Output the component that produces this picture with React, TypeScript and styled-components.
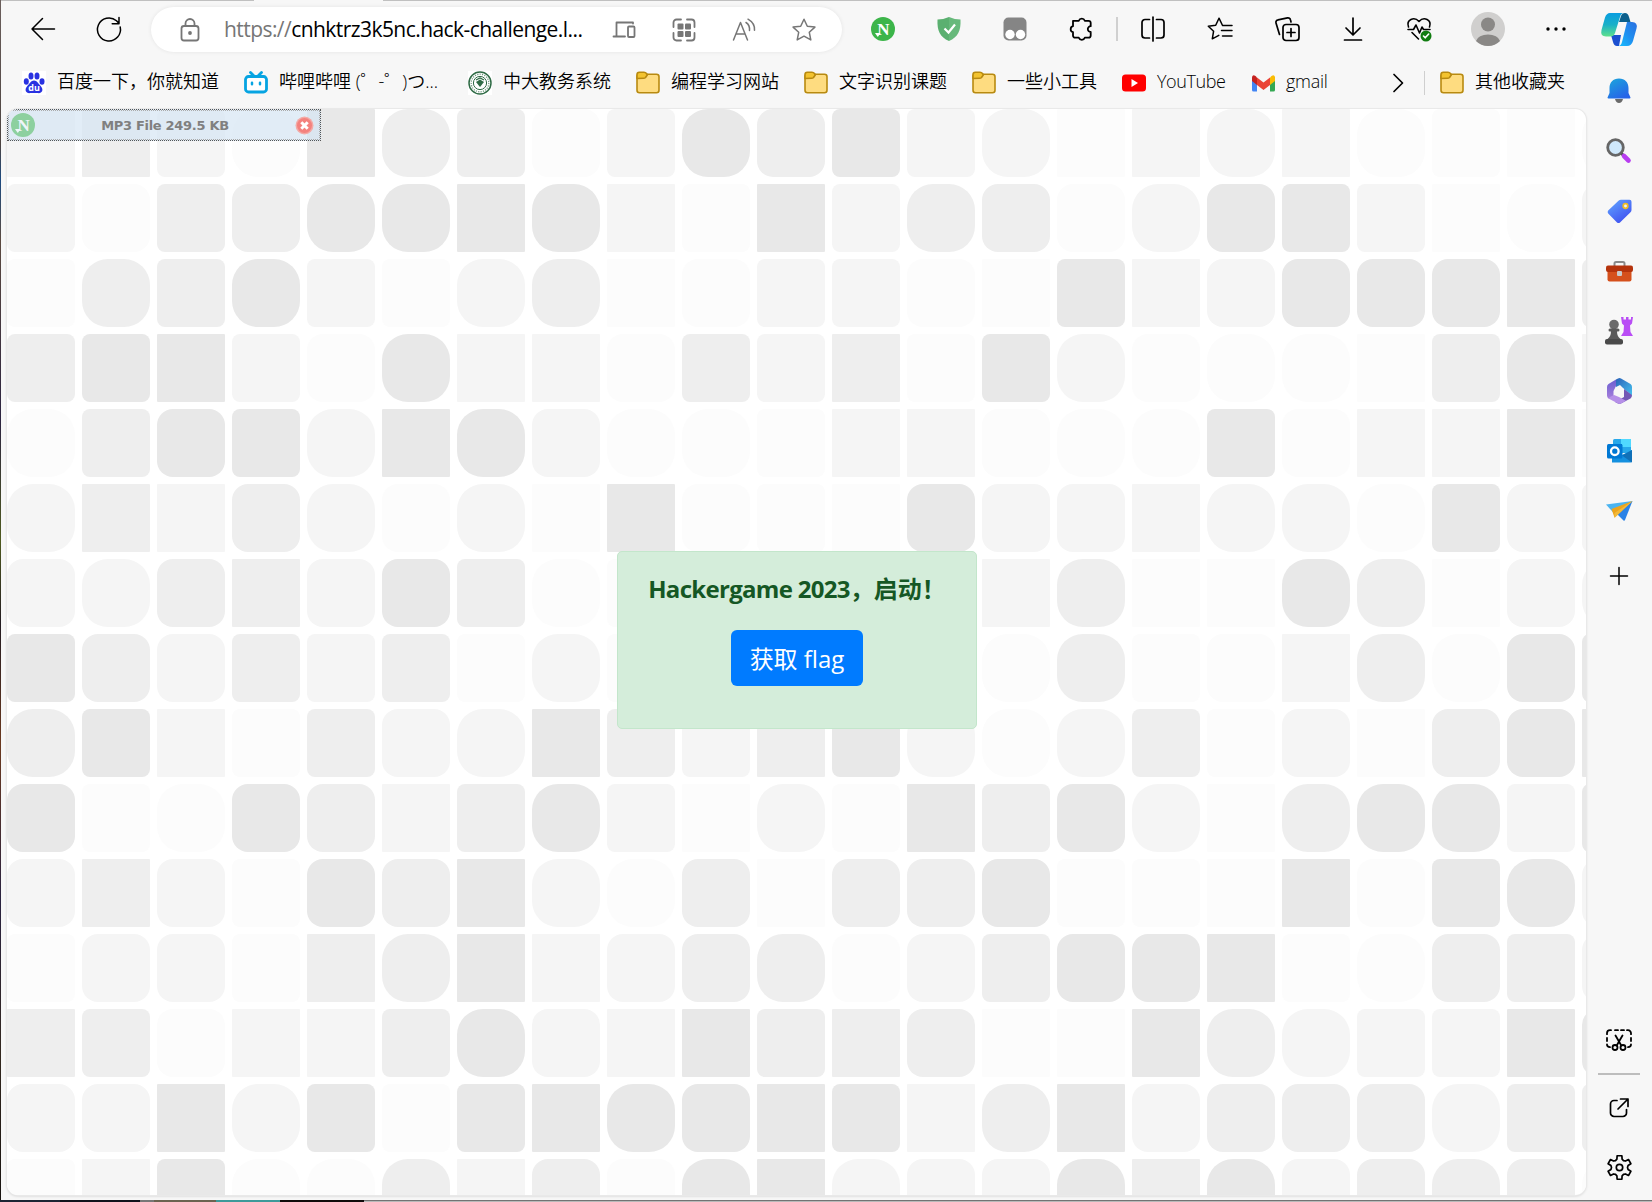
import React from "react";
import styled, { createGlobalStyle } from "styled-components";

const Global = createGlobalStyle`
  * { box-sizing: border-box; }
  html, body { margin: 0; padding: 0; overflow: hidden; }
  body { font-family: "Open Sans", "Noto Sans", "Noto Sans CJK SC", sans-serif; color: #000; }
  svg { display: block; flex: none; overflow: visible; }
`;

const Desktop = styled.div`
  width: 1652px;
  height: 1202px;
  display: grid;
  grid-template-columns: 1px 1586px 65px;
  grid-template-rows: 1px 1199px 2px;
  background: #f7f7f7;
`;
const LeftEdge = styled.div`
  grid-row: 1 / 3;
  background: linear-gradient(#6b5f5c, #4c4340 12%, #1d4a80 15%, #5b4a40 20%, #2c2440 35%, #4f5a20 45%, #241c22 52%, #6b3a20 62%, #2a2340 75%, #33281f 88%, #181310);
`;
const TabEdge = styled.div`
  grid-column: 2 / 4;
  background: linear-gradient(90deg, #c0c0c0 253px, #f7f7f7 253px, #f7f7f7 382px, #c0c0c0 382px);
`;
const BottomEdge = styled.div`
  grid-column: 1 / 4;
  background:
    linear-gradient(90deg, #1c2534 0 60px, #10131c 60px 140px, #777 140px 154px, #6b6350 154px 216px, #3d9a9a 216px 280px, #100b0b 280px 364px, transparent 364px),
    linear-gradient(#737373 1px, #b9b9b9 1px);
`;

const Main = styled.main`
  display: flex;
  flex-direction: column;
  min-width: 0;
`;
const Toolbar = styled.div`
  height: 57px;
  flex: none;
  display: flex;
  align-items: center;
  padding: 0 0 2px 9px;
`;
const Cell = styled.div<{ $w?: number }>`
  width: ${(p) => p.$w ?? 66}px;
  flex: none;
  display: flex;
  justify-content: center;
  align-items: center;
`;
const AddressBar = styled.div`
  width: 691px;
  height: 45px;
  flex: none;
  margin: 2px 8px 0 9px;
  padding: 0 8px 0 27px;
  border-radius: 23px;
  background: #fff;
  box-shadow: 0 0 4px rgba(0, 0, 0, 0.08);
  display: flex;
  align-items: center;
  color: #767676;
`;
const Url = styled.div`
  flex: 1;
  margin: -1px 0 0 22px;
  font-size: 21px;
  line-height: 30px;
  letter-spacing: -0.56px;
  white-space: nowrap;
  b { font-weight: 400; color: #000; }
`;
const Divider = styled.div<{ $w: number; $h: number; $c: string }>`
  width: ${(p) => p.$w}px;
  height: ${(p) => p.$h}px;
  flex: none;
  background: ${(p) => p.$c};
`;

const Bookmarks = styled.nav`
  height: 51px;
  flex: none;
  display: flex;
  align-items: center;
  padding: 0 0 2px 20px;
`;
const Bookmark = styled.div<{ $w: number }>`
  width: ${(p) => p.$w}px;
  flex: none;
  display: flex;
  align-items: center;
  gap: 11px;
  font-size: 18px;
  line-height: 26px;
  white-space: nowrap;
`;
const Label = styled.span<{ $ls?: number }>`
  margin-top: -3px;
  font-weight: 350;
  letter-spacing: ${(p) => p.$ls ?? 0}px;
`;

const Page = styled.section`
  width: 1579px;
  height: 1086px;
  margin-left: 6px;
  flex: none;
  display: grid;
  overflow: hidden;
  background: #fff;
  border-radius: 11px;
  box-shadow: 0 0 0 1px #e9e9e9, 0 1px 3px rgba(0, 0, 0, 0.18);
`;
const Wallpaper = styled.div`
  grid-area: 1 / 1;
  display: grid;
  grid-template-columns: repeat(22, 68px);
  grid-auto-rows: 68px;
  gap: 7px;
  width: 1580px;
  height: 1087px;
  overflow: hidden;
`;
const shades: Record<string, string> = { a: "#fcfcfc", b: "#f5f5f5", c: "#eeeeee", d: "#e8e8e8" };
const radii = [1, 8, 16, 26];
const Tile = styled.div<{ $shade: string; $round: number }>`
  background: ${(p) => shades[p.$shade]};
  border-radius: ${(p) => radii[p.$round]}px;
`;
const Overlay = styled.div`
  grid-area: 1 / 1;
  z-index: 1;
  display: flex;
  flex-direction: column;
`;
const MediaBar = styled.div`
  width: 314px;
  height: 32px;
  padding: 0 6px 0 3px;
  border: 1px dotted #555;
  outline: 1px dotted #aaa;
  outline-offset: -2px;
  background: rgba(214, 230, 243, 0.7);
  display: flex;
  align-items: center;
  justify-content: space-between;
  font: bold 13px "DejaVu Sans", sans-serif;
  letter-spacing: -0.3px;
  color: #808080;
`;
const Faded = styled.span`
  opacity: 0.5;
`;
const Alert = styled.div`
  width: 360px;
  height: 178px;
  margin: 410px 0 0 610px;
  border: 1px solid #c3e6cb;
  border-radius: 5px;
  background: #d4edda;
  display: flex;
  flex-direction: column;
  align-items: center;
`;
const Title = styled.h1`
  margin: 19px 0 0;
  font-size: 24px;
  line-height: 36px;
  font-weight: 700;
  white-space: nowrap;
  color: #155724;
`;
const Tight = styled.span`
  letter-spacing: -0.7px;
`;
const FlagButton = styled.button`
  width: 132px;
  height: 56px;
  margin-top: 23px;
  padding: 2px 0 0;
  border: 0;
  border-radius: 6px;
  background: #007bff;
  color: #fff;
  font: 400 24px/36px "Open Sans", "Noto Sans CJK SC", sans-serif;
  white-space: nowrap;
`;

const Sidebar = styled.aside`
  display: flex;
  flex-direction: column;
  align-items: center;
  padding-right: 1px;
`;
const Slot = styled.div<{ $h?: number }>`
  height: ${(p) => p.$h ?? 60}px;
  flex: none;
  display: flex;
  align-items: center;
  justify-content: center;
`;
const Spacer = styled.div`
  flex: 1;
`;

const rows = [
  "b0 c0 b1 a3 d0 c3 c1 a2 b1 d3 c2 d1 b1 b3 a0 b0 b3 b0 a3 a1 a0 a3",
  "b1 a2 c1 c2 d3 d3 d0 d3 b0 a1 d0 b1 c3 c2 a2 b3 d2 d1 b1 a0 a3 b2",
  "a1 c3 c1 d3 b1 a1 b3 c3 a0 a2 b1 b1 a2 a0 d1 b0 b2 d2 d2 d2 d0 c1",
  "c1 d1 d0 b1 a2 d3 b0 b0 a2 c1 b1 c0 a1 d1 b3 a2 a3 a3 a0 c1 d3 b0",
  "a3 c1 d2 d1 b3 d0 d3 b2 a3 a3 a1 b0 b0 a2 a3 a3 d1 a2 b0 b0 d0 a0",
  "b3 c0 b0 c2 b3 a2 b3 a0 d0 a2 a1 a0 d2 b2 b2 b0 b3 b3 a3 d1 b2 b1",
  "b2 b3 c2 c0 b2 d2 c1 a3 a1 a1 a1 a1 a1 b0 c3 a0 a0 d3 c3 a0 b2 b3",
  "d1 c2 b2 c1 b1 c1 a1 b3 a1 a1 a1 a1 a1 a3 c3 a1 a2 b0 c3 a3 d2 d1",
  "c3 d1 b0 a1 c1 b2 b3 d0 c1 b1 c0 d1 b3 a3 b3 c1 a1 b2 a0 c2 d2 d0",
  "d2 a1 a3 d2 c2 b0 c1 d3 b1 a0 b3 a1 d0 c1 d2 b3 a0 c3 d3 d3 b1 d1",
  "b2 c0 b2 a1 d2 c2 d0 b3 a3 c2 a0 c2 c2 d2 a1 a1 a0 d0 a2 d1 d3 b2",
  "a1 b2 b2 a1 c0 c3 d0 b0 b2 c2 c3 a2 b2 c1 d2 d2 d0 a1 a3 c2 c1 b2",
  "c0 c1 a2 b0 b0 c1 d3 b2 b0 d0 c1 c0 c2 a0 a0 d0 c3 b3 b1 b1 d0 d2",
  "b2 b2 d0 b3 d1 a1 d1 d0 d3 d2 d0 d1 b0 c3 d0 b2 c2 c2 c2 b3 c1 c1",
  "a1 b0 d1 a3 a3 c3 b0 c2 a2 d3 d0 b3 b2 b2 d3 c0 d3 b2 c2 c3 c2 a3",
];

type IconProps = { w?: number; h?: number; sw?: number; color?: string; children: React.ReactNode };
const Icon = ({ w = 24, h = 24, sw = 1.5, color = "currentColor", children }: IconProps) => (
  <svg width={w} height={h} viewBox={`0 0 ${w} ${h}`} fill="none" stroke={color} strokeWidth={sw} strokeLinecap="round" strokeLinejoin="round">
    {children}
  </svg>
);

const Back = () => <Icon><path d="M23.500 12H1M11.500 1.500L1 12l10.500 10.500" /></Icon>;
const Reload = () => <Icon w={26} h={26}><path d="M24.200 11A11.500 11.500 0 1 1 20.500 4.800L23 7.500M23 1.500V7.800h-6.800" /></Icon>;
const Lock = () => (
  <Icon sw={1.8}><rect x="3.500" y="8" width="17" height="14.500" rx="2.500" /><path d="M7.500 8V5.500a4.500 4.500 0 0 1 9 0V8" /><circle cx="12" cy="15" r="1" fill="currentColor" /></Icon>
);
const Devices = () => (
  <Icon sw={1.8}><path d="M21 5.500V4.500H4.500V18M1.500 18.500H13" /><rect x="16" y="8.500" width="6.500" height="10.500" rx="1" /></Icon>
);
const Qr = () => (
  <Icon sw={1.8}>
    <path d="M9 1.500H4.500a3 3 0 0 0-3 3V9M15 1.500h4.500a3 3 0 0 1 3 3V9M9 22.500H4.500a3 3 0 0 1-3-3V15M15 22.500h4.500a3 3 0 0 0 3-3V15" />
    <g fill="currentColor" stroke="none"><rect x="5.500" y="5.500" width="6" height="6" rx="1" /><rect x="13" y="5.500" width="6" height="6" rx="1" /><rect x="5.500" y="13" width="6" height="6" rx="1" /><rect x="13" y="13" width="6" height="6" rx="1" /></g>
  </Icon>
);
const ReadAloud = () => (
  <Icon><path d="M1.500 22L8.500 4.500 15.500 22M4 16h9M14 4.500q4 2.500 3.500 8M16 1.200q7 4 6.500 11" /></Icon>
);
const star = "M12 1.200l3.300 7 7.600.9-5.600 5.200 1.500 7.600L12 18.200l-6.800 3.700 1.500-7.600L1.100 9.100l7.600-.9z";
const Star = () => <Icon><path d={star} /></Icon>;
const NeatMark = ({ r = 12 }: { r?: number }) => (
  <svg width={r * 2} height={r * 2} viewBox="0 0 24 24">
    <circle cx="12" cy="12" r="12" fill="#3cb54a" />
    <text x="12.500" y="17.500" fontSize="17" fontWeight="700" textAnchor="middle" fill="#fff" fontFamily="Liberation Serif, serif">N</text>
    <path d="M4 16h5.500L6.800 20z" fill="#fff" />
  </svg>
);
const Shield = () => (
  <svg width="24" height="24" viewBox="0 0 24 24">
    <path d="M12 0Q18 2.500 23.500 2.500C24 14 21 20 12 24z" fill="#67b97b" /><path d="M12 0Q6 2.500.5 2.500C0 14 3 20 12 24z" fill="#5bb070" />
    <path d="M7.500 11.500l4 4 6.500-8" fill="none" stroke="#fff" strokeWidth="2.200" />
  </svg>
);
const Tamper = () => (
  <svg width="24" height="24" viewBox="0 0 24 24">
    <rect x=".5" y=".5" width="23" height="23" rx="5" fill="#858585" />
    <circle cx="7" cy="17.500" r="4.700" fill="#fff" /><circle cx="17.500" cy="17.500" r="4.700" fill="#fff" />
  </svg>
);
const Puzzle = () => (
  <Icon sw={1.8}><path d="M4 3.800h5.800a3.200 3.200 0 0 1 6 0h3.700a2.200 2.200 0 0 1 2.200 2.200V9.200a2.900 2.900 0 1 0 0 5.800v3.500a2.200 2.200 0 0 1-2.200 2.200h-3.700a3.200 3.200 0 0 1-6 0H6.200A2.200 2.200 0 0 1 4 18.500V15.200a3.100 3.100 0 0 1 0-6z" /></Icon>
);
const Split = () => (
  <Icon sw={1.7}><path d="M8.500 2.500H4a3 3 0 0 0-3 3v12.500a3 3 0 0 0 3 3h4.500M15.500 2.500H20a3 3 0 0 1 3 3v12.500a3 3 0 0 1-3 3h-4.500M12 0v24" /></Icon>
);
const Favs = () => (
  <Icon w={26}><path d="M15.300 8L12 1.200 8.700 8.200 1.300 9.200l5.300 5-1.300 7.600 6.500-3.400M15.500 8.500H25M14.500 13.500H25M15.500 19H25" /></Icon>
);
const Collections = () => (
  <Icon sw={1.7}><path d="M4.500 17.500L1 6a2.500 2.500 0 0 1 2-3.200L12.500.9a2.500 2.500 0 0 1 3 2L16 5" /><rect x="8" y="7.500" width="16" height="16" rx="3" /><path d="M16 11.500v8M12 15.500h8" /></Icon>
);
const Download = () => <Icon sw={1.7}><path d="M12 1v16.500M5 11l7 7 7-7M3.500 23h17" /></Icon>;
const Heart = () => (
  <Icon sw={1.6}>
    <path d="M1.500 10C-1 3 7 -1 12 4.500 17 -1 25 3 22.500 10M1 12.500h5.500L9 8l3.500 8L15 10l1.500 2.500H23M5 15.500l6.500 6.500" />
    <circle cx="19" cy="19" r="5.500" fill="#107c10" stroke="none" /><path d="M16.500 19l1.700 1.800 3.500-3.800" stroke="#fff" />
  </Icon>
);
const Avatar = () => (
  <svg width="34" height="34" viewBox="0 0 34 34">
    <circle cx="17" cy="17" r="17" fill="#d0cfce" /><circle cx="17" cy="12.500" r="7" fill="#8a8886" />
    <path d="M5 29a12.200 8 0 0 1 24 0a17 17 0 0 1-24 0z" fill="#8a8886" />
  </svg>
);
const Dots = () => <svg width="24" height="6" viewBox="0 0 24 6"><circle cx="4" cy="3" r="1.700" /><circle cx="12" cy="3" r="1.700" /><circle cx="20" cy="3" r="1.700" /></svg>;
const Copilot = () => (
  <svg width="36" height="33" viewBox="0 0 36 33">
    <defs>
      <linearGradient id="cpA" x1="0" y1="0" x2="0" y2="1"><stop offset="0" stopColor="#0a9de0" /><stop offset=".5" stopColor="#19b0c8" /><stop offset="1" stopColor="#5fe08c" /></linearGradient>
      <linearGradient id="cpB" x1="1" y1="0" x2="0" y2="1"><stop offset="0" stopColor="#2b6fe0" /><stop offset=".5" stopColor="#1f8ff0" /><stop offset="1" stopColor="#18c0ff" /></linearGradient>
    </defs>
    <path d="M18 9l2-6q1-3 4-3 3 0 4 4l1.500 5z" fill="#0b5f8c" />
    <path d="M10 22h10l-2 11h-2q-3 0-4-4z" fill="#1b4fd0" />
    <path d="M9 0h14q-3 0-4 4l-5 16q-1 3.500-5 3.500H5Q-1 23.500.5 17L4 4.500Q5.500 0 9 0z" fill="url(#cpA)" />
    <path d="M26 9h5q6 0 4.500 6.500L32 28q-1.500 5-6 5h-9q3 0 4-4z" fill="url(#cpB)" />
  </svg>
);

const Folder = () => (
  <Icon sw={1.6} color="#b88a10">
    <rect x="1" y="3.300" width="22" height="18.500" rx="2.500" fill="#fedc80" />
    <path d="M1 7.500V3.500a2.300 2.300 0 0 1 2.300-2.300H8q1.500 0 2.500 1.300l.8 1.500L9.500 6.500Q8.800 7.300 7.500 7.300z" fill="#f3c32f" />
  </Icon>
);
const Baidu = () => (
  <svg width="25" height="24" viewBox="0 0 25 24">
    <rect x="1" width="24" height="24" fill="#fff" />
    <g transform="translate(1 0)">
      <g fill="#2932e1"><ellipse cx="4.300" cy="10.500" rx="2.500" ry="3.300" /><ellipse cx="9" cy="5" rx="2.500" ry="3.500" /><ellipse cx="15" cy="5" rx="2.500" ry="3.500" /><ellipse cx="20" cy="10.500" rx="2.500" ry="3.300" /><path d="M12 9.500c3 0 4 3 6.500 5.200 4 4.300 1 8.300-3 7.300h-7c-4 1-7-3-3-7.300C8 12.500 9 9.500 12 9.500z" /></g>
      <text x="12" y="20" fontSize="9" fontWeight="700" textAnchor="middle" fill="#fff" fontFamily="Open Sans, sans-serif">du</text>
    </g>
  </svg>
);
const Bili = () => (
  <Icon w={25} sw={2.8} color="#06a4e2"><rect x="2.500" y="5.500" width="21" height="15.500" rx="3" fill="#fff" /><path d="M7.500 1.500l3 3M18.500 1.500l-3 3" /><path d="M9 11.800v1.500M17 11.800v1.500" strokeWidth="2.500" /></Icon>
);
const School = () => (
  <svg width="24" height="24" viewBox="0 0 24 24" fill="none" stroke="#2f6b45">
    <rect width="24" height="24" fill="#fff" stroke="none" />
    <circle cx="12" cy="12" r="11" strokeWidth="1.500" /><circle cx="12" cy="12" r="8.800" strokeWidth="1.200" strokeDasharray="1.200 1.200" opacity=".7" />
    <circle cx="12" cy="12" r="6.600" strokeWidth="1" /><path d="M8 11l4 5 4-5-4-2.500z" fill="#2f6b45" stroke="none" /><path d="M8 9l4-2 4 2" strokeWidth="1.200" />
  </svg>
);
const YouTube = () => <svg width="24" height="24" viewBox="0 0 24 24"><rect y="3.500" width="24" height="17" rx="3.500" fill="#f00" /><path d="M9.500 8l6.500 4-6.500 4z" fill="#fff" /></svg>;
const Gmail = () => (
  <svg width="23" height="24" viewBox="0 0 23 24">
    <path d="M0 6v13q0 1.500 1.500 1.500H5V9z" fill="#4285f4" /><path d="M23 6v13q0 1.500-1.500 1.500H18V9z" fill="#34a853" />
    <path d="M5 6.500l6.500 5 6.500-5v7.500l-6.500 5L5 14z" fill="#ea4335" /><path d="M5 6.500L3.500 5Q0 3 0 7v3l5 4z" fill="#c5221f" /><path d="M18 6.500L19.500 5Q23 3 23 7v3l-5 4z" fill="#fbbc04" />
  </svg>
);
const Close = () => (
  <svg width="19" height="19" viewBox="0 0 19 19"><circle cx="9.500" cy="9.500" r="9" fill="#f3aaa6" /><circle cx="9.500" cy="9.500" r="7.500" fill="#f4827e" /><path d="M6.300 6.300l6.400 6.400M12.700 6.300l-6.400 6.400" stroke="#fff" strokeWidth="3" /></svg>
);

const Bell = () => (
  <svg width="24" height="26" viewBox="0 0 24 26">
    <defs><linearGradient id="bell" x1="0" y1="0" x2=".6" y2="1"><stop offset="0" stopColor="#1aa8dc" /><stop offset="1" stopColor="#2764e8" /></linearGradient></defs>
    <path d="M8 21h8q-1 4-4 4t-4-4z" fill="#6a6a6a" /><path d="M12 .5c6 0 9.500 4 9.500 9.500v5L23.500 19.500q0 1-1 1h-21q-1 0-1-1L2.500 15v-5C2.500 4.500 6 .5 12 .5z" fill="url(#bell)" />
  </svg>
);
const Search = () => (
  <svg width="26" height="26" viewBox="0 0 26 26"><circle cx="9.500" cy="9.500" r="7.800" fill="#cfe8fb" stroke="#666" strokeWidth="2.800" /><path d="M15.500 15.500l3 3" stroke="#555" strokeWidth="3" /><path d="M18 18l4.500 4.500" stroke="#b83df0" strokeWidth="4.600" strokeLinecap="round" /></svg>
);
const Tag = () => (
  <svg width="25" height="25" viewBox="0 0 25 25">
    <defs><linearGradient id="tag" x1="0" y1="0" x2=".7" y2="1"><stop offset="0" stopColor="#62a8ff" /><stop offset="1" stopColor="#3f4ff0" /></linearGradient></defs>
    <path d="M14 .8h8.500q2 0 2 2V11q0 1.200-1 2.200L13 23.500q-1.500 1.200-3 0L1.200 14.500q-1.200-1.500 0-3L11.500 1.800Q12.500.8 14 .8z" fill="url(#tag)" />
    <circle cx="18.500" cy="7" r="2.300" fill="#e8f0ff" stroke="#f0bc22" strokeWidth="1.700" />
  </svg>
);
const Toolbox = () => (
  <svg width="27" height="21" viewBox="0 0 27 21"><path d="M8.500 5V2.500Q8.500 1 10 1h7q1.500 0 1.500 1.500V5" fill="none" stroke="#8a8a8a" strokeWidth="2" /><path d="M1.500 9h24v9.500q0 2-2 2h-20q-2 0-2-2z" fill="#d5501c" /><rect y="4.500" width="27" height="6.500" rx="2" fill="#b5330c" /><rect x="11" y="10" width="5" height="5" rx="1" fill="#c9c9c9" /></svg>
);
const Chess = () => (
  <svg width="28" height="28" viewBox="0 0 28 28">
    <path d="M16 0h2.500v2.500H21V0h2.500v2.500H26V0h2l-1 6.500-2 2 .5 6.500 2.500 4H16l2.500-4 .5-6.500-2-2z" fill="#b94df5" />
    <circle cx="9" cy="7.500" r="4.800" fill="#6a6a6a" /><path d="M3.500 13q0-1.500 1.500-1.500h8q1.500 0 1.500 1.500t-1.500 1.500h-1q0 5 3.500 7.500H2.500Q6 19.500 6 14.500H5Q3.500 14.500 3.500 13z" fill="#5a5a5a" /><rect y="22" width="18" height="5.500" rx="2" fill="#4a4a4a" />
  </svg>
);
const M365 = () => (
  <svg width="25" height="26" viewBox="0 0 25 26">
    <defs>
      <linearGradient id="mA" x1="0" y1="0" x2="0" y2="1"><stop offset="0" stopColor="#6a5fd0" /><stop offset="1" stopColor="#a87fdc" /></linearGradient>
      <linearGradient id="mB" x1="0" y1="0" x2="1" y2="1"><stop offset="0" stopColor="#2a62b8" /><stop offset="1" stopColor="#45c2f0" /></linearGradient>
    </defs>
    <path d="M9 1.500L1.500 6Q0 7 0 9v8.500q0 2 1.500 3l5 1V13l3-6z" fill="url(#mA)" />
    <path d="M9 1.500L11 .4q1.500-.8 3 0l9.500 5.600Q25 7 25 9v8.500l-8-6.500-4-4-4 2z" fill="url(#mB)" />
    <path d="M25 17q0 2.500-1.500 3.500L14 25.600q-1.500.8-3 0L8 24l9-5V11z" fill="#7358b5" />
    <path d="M1.500 20.500L11 25.600q1.500.8 3 0l5-2.800-7-3.800-5-2-4 2z" fill="#b690e8" />
    <path d="M12.500 8.500l4.200 2.200v4.800l-4.200 2.400-4.200-2.400v-4.800z" fill="#f7f7f7" />
  </svg>
);
const Outlook = () => (
  <svg width="25" height="24" viewBox="0 0 25 24"><rect x="6" y="0" width="18" height="14" rx="1.500" fill="#28a8ea" /><rect x="14" y="0" width="10" height="8" fill="#50d9ff" /><rect x="6" y="5" width="9" height="8" fill="#0364b8" /><path d="M5 23.500V14l10 2 10-5v11q0 1.500-1.500 1.500z" fill="#1490df" /><path d="M15 16.500l10 7V11z" fill="#1070b8" /><rect y="5" width="15.500" height="14.500" rx="1.500" fill="#0078d4" /><circle cx="7.800" cy="12.200" r="3.800" fill="none" stroke="#fff" strokeWidth="2.300" /></svg>
);
const Plane = () => (
  <svg width="27" height="20" viewBox="0 0 27 20"><path d="M0 3.500L26.500 0 9 13.500z" fill="#4bb4f0" /><path d="M10 12L26.500 0 19 19q-.5 1.200-1.500.4z" fill="#2b82e6" /><path d="M5.500 8L26.500 0 8.500 16.500z" fill="#eda41c" /><path d="M8.500 17v-5L26.500 0z" fill="#f2b93a" /></svg>
);
const Plus = () => <Icon w={18} h={18}><path d="M9 .5v17M.5 9h17" /></Icon>;
const Snip = () => (
  <Icon w={26} h={22} sw={1.8}>
    <path d="M5 1.200H4a3 3 0 0 0-3 3v1M9 1.200h3M15 1.200h3M21 1.200h1a3 3 0 0 1 3 3v1M1 9v3M25 9v3M1 15.500q0 2.500 3 2.700M25 15.500q0 2.500-3 2.700M9.500 6.500L15 16M16.500 6.500L11 16" />
    <circle cx="9" cy="18.500" r="2.500" /><circle cx="17" cy="18.500" r="2.500" />
  </Icon>
);
const Open = () => <Icon w={20} h={20} sw={1.7}><path d="M8 2.500H5A3.500 3.500 0 0 0 1.500 6v9A3.500 3.500 0 0 0 5 18.500h9a3.500 3.500 0 0 0 3.500-3.500v-3.500M11.500 1h7.500v7.500M19 1L9 11" /></Icon>;
const gearPath = (() => {
  const pts: string[] = [];
  for (let i = 0; i < 6; i++) {
    const base = (i * Math.PI) / 3 - Math.PI / 2;
    [[-0.3, 8.8], [-0.2, 12], [0.2, 12], [0.3, 8.8], [0.52, 8]].forEach(([a, r]) =>
      pts.push(`${(12.5 + r * Math.cos(base + a)).toFixed(2)} ${(12.5 + r * Math.sin(base + a)).toFixed(2)}`));
  }
  return `M${pts.join("L")}Z`;
})();
const Gear = () => <Icon w={25} h={25} sw={1.7}><path d={gearPath} /><circle cx="12.500" cy="12.500" r="3.200" /></Icon>;
const Chevron = () => <Icon w={10} h={18} sw={1.7}><path d="M1 .5l8.500 8.500L1 17.500" /></Icon>;

const bookmarks = [
  { w: 222, icon: <Baidu />, text: "百度一下，你就知道" },
  { w: 225, icon: <Bili />, text: "哔哩哔哩 (゜-゜)つ..." },
  { w: 168, icon: <School />, text: "中大教务系统" },
  { w: 168, icon: <Folder />, text: "编程学习网站" },
  { w: 168, icon: <Folder />, text: "文字识别课题" },
  { w: 150, icon: <Folder />, text: "一些小工具" },
  { w: 130, icon: <YouTube />, text: "YouTube", ls: -0.4 },
  { w: 131, icon: <Gmail />, text: "gmail", ls: -0.3 },
];

export default function App() {
  return (
    <>
      <Global />
      <Desktop>
        <LeftEdge />
        <TabEdge />
        <Main>
          <Toolbar>
            <Cell><Back /></Cell>
            <Cell><Reload /></Cell>
            <AddressBar>
              <Lock />
              <Url>https://<b>cnhktrz3k5nc.hack-challenge.l...</b></Url>
              <Cell $w={60}><Devices /></Cell>
              <Cell $w={60}><Qr /></Cell>
              <Cell $w={60}><ReadAloud /></Cell>
              <Cell $w={60}><Star /></Cell>
            </AddressBar>
            <Cell><NeatMark /></Cell>
            <Cell><Shield /></Cell>
            <Cell><Tamper /></Cell>
            <Cell><Puzzle /></Cell>
            <Cell $w={6}><Divider $w={2} $h={24} $c="#d0d0d0" /></Cell>
            <Cell><Split /></Cell>
            <Cell $w={68}><Favs /></Cell>
            <Cell><Collections /></Cell>
            <Cell><Download /></Cell>
            <Cell><Heart /></Cell>
            <Cell $w={72}><Avatar /></Cell>
            <Cell $w={64}><Dots /></Cell>
          </Toolbar>
          <Bookmarks>
            {bookmarks.map((b) => (
              <Bookmark key={b.text} $w={b.w}>{b.icon}<Label $ls={b.ls}>{b.text}</Label></Bookmark>
            ))}
            <Cell $w={30}><Chevron /></Cell>
            <Cell $w={11} />
            <Divider $w={1} $h={24} $c="#cfcfcf" />
            <Cell $w={15} />
            <Bookmark $w={130}><Folder /><Label>其他收藏夹</Label></Bookmark>
          </Bookmarks>
          <Page>
            <Wallpaper>
              {rows.flatMap((row, y) =>
                row.split(" ").map((t, x) => <Tile key={`${x}-${y}`} $shade={t[0]} $round={Number(t[1])} />)
              )}
            </Wallpaper>
            <Overlay>
              <MediaBar><Faded><NeatMark /></Faded>MP3 File 249.5 KB<Close /></MediaBar>
              <Alert>
                <Title><Tight>Hackergame 2023</Tight>，启动！</Title>
                <FlagButton>获取 flag</FlagButton>
              </Alert>
            </Overlay>
          </Page>
        </Main>
        <Sidebar>
          <Slot $h={57}><Copilot /></Slot>
          <Slot $h={66}><Bell /></Slot>
          <Slot $h={54}><Search /></Slot>
          <Slot $h={66}><Tag /></Slot>
          <Slot $h={54}><Toolbox /></Slot>
          <Slot $h={66}><Chess /></Slot>
          <Slot $h={54}><M365 /></Slot>
          <Slot $h={66}><Outlook /></Slot>
          <Slot $h={54}><Plane /></Slot>
          <Slot $h={76}><Plus /></Slot>
          <Spacer />
          <Slot $h={67}><Snip /></Slot>
          <Divider $w={42} $h={2} $c="#bdbdbd" />
          <Slot $h={66}><Open /></Slot>
          <Slot $h={53}><Gear /></Slot>
          <Slot $h={6} />
        </Sidebar>
        <BottomEdge />
      </Desktop>
    </>
  );
}
